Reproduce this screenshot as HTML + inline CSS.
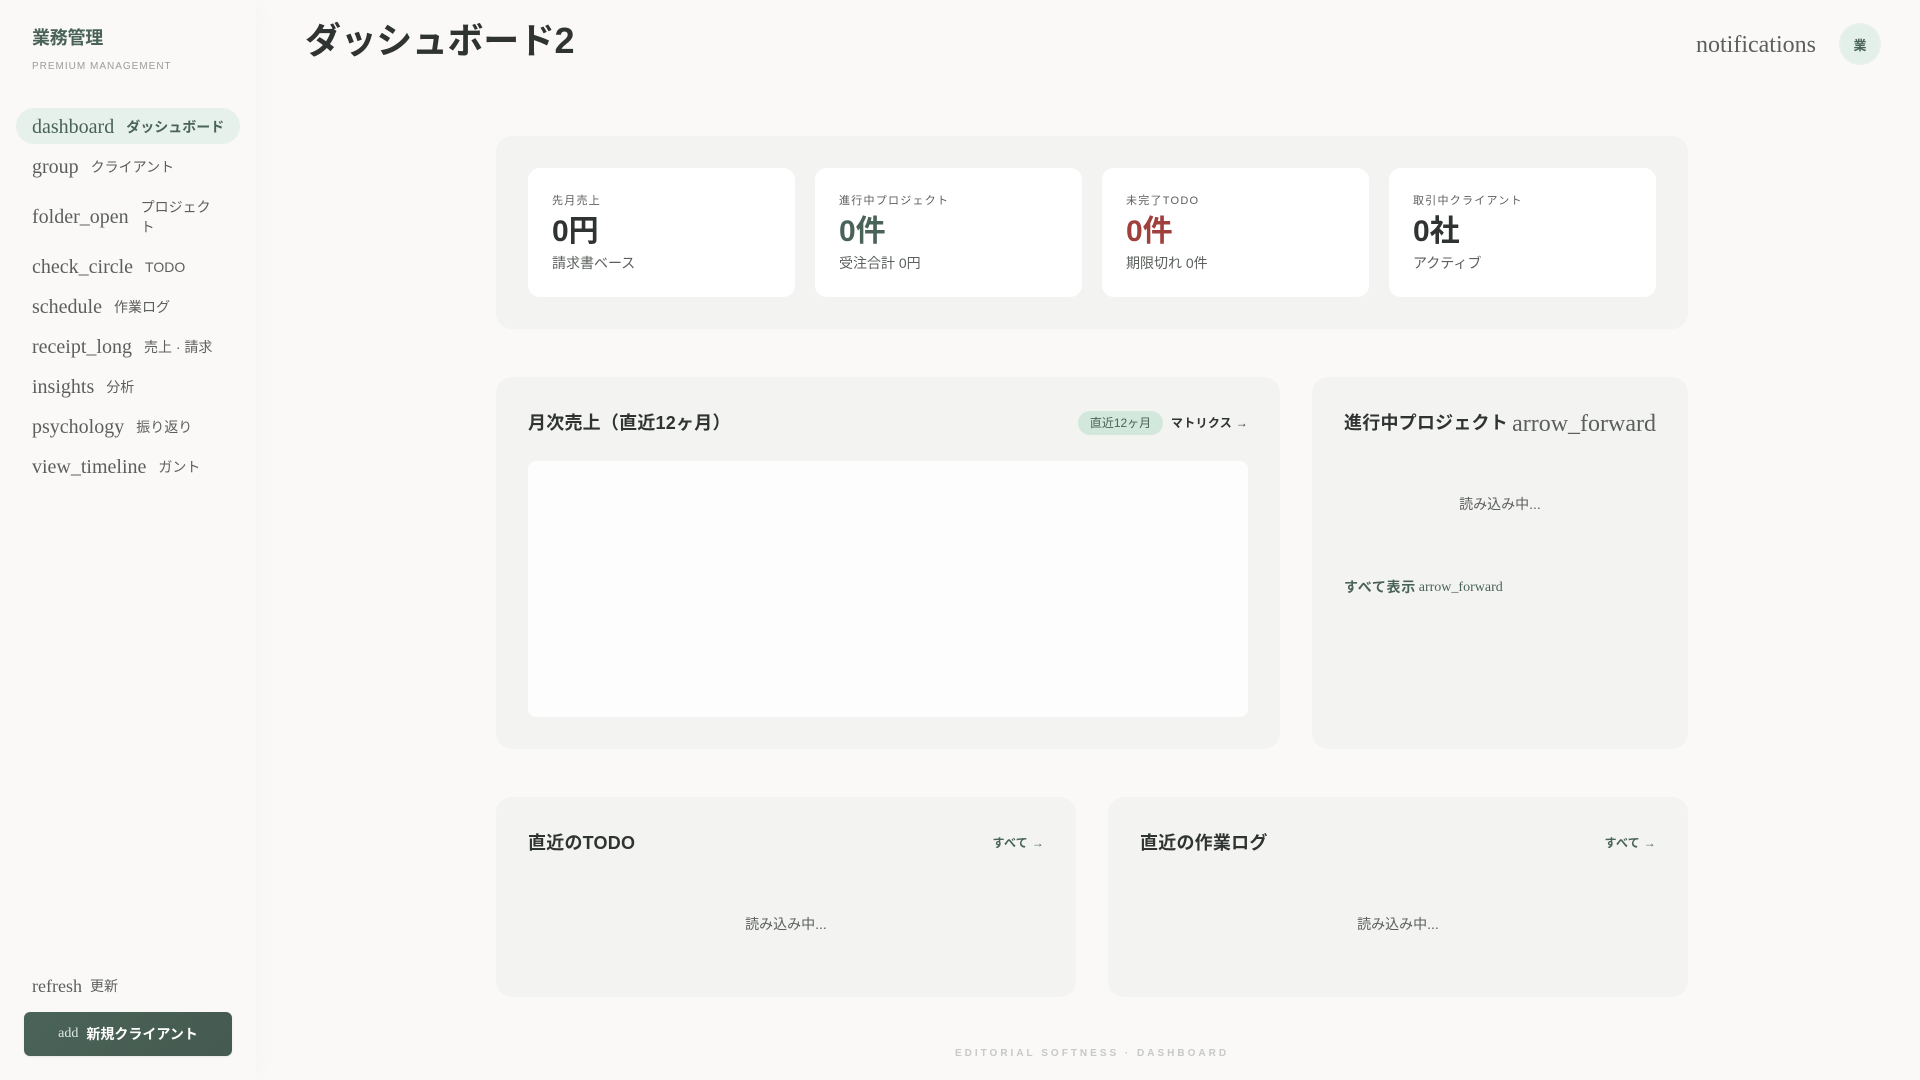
<!DOCTYPE html>
<html lang="ja"><head><meta charset="utf-8"><title>ダッシュボード2</title>
<style>
*{box-sizing:border-box;margin:0;padding:0}
html,body{width:1920px;height:1080px;overflow:hidden;background:#faf9f7;color:#2f3331;font-family:"Liberation Sans","Noto Sans CJK JP",sans-serif}
.ic{font-family:"Liberation Serif",serif;font-weight:400}
.abs{position:absolute}
#side{position:absolute;left:0;top:0;width:256px;height:1080px;background:#fbf9f8;box-shadow:4px 0 24px rgba(47,51,49,.02)}
.logo{position:absolute;left:32px;top:25px;font-size:18px;line-height:26px;font-weight:700;color:#4a6358;letter-spacing:-.25px}
.sub{position:absolute;left:32px;top:60px;font-size:10px;line-height:14px;letter-spacing:1px;color:#9a9d9a}
nav{position:absolute;left:16px;top:108px;width:224px}
nav a{display:flex;align-items:center;gap:12px;padding:9px 16px 7px;margin-bottom:4px;min-height:36px;border-radius:18px;color:#5c605d;font-size:14px;line-height:20px}
nav a .ic{font-size:20px;line-height:20px;flex:none}
nav a.on{background:#e6f1ec;color:#4a6358;font-weight:700;white-space:nowrap}
.refresh{position:absolute;left:32px;top:976px;display:flex;align-items:center;gap:8px;color:#5c605d;font-size:14px;line-height:20px}
.refresh .ic{font-size:18px}
.btn{position:absolute;left:24px;top:1012px;width:208px;height:44px;border-radius:6px;background:linear-gradient(135deg,#4a6358,#455a50);color:#fff;font-size:14px;font-weight:700;display:flex;align-items:center;justify-content:center;gap:8px;box-shadow:0 1px 2px rgba(0,0,0,.08)}
.btn .ic{font-size:14px;color:#dbe9e2}
h1{position:absolute;left:305px;top:16px;font-size:36px;line-height:50px;font-weight:700;white-space:nowrap;color:#2f3331;letter-spacing:-.36px}
.bell{position:absolute;left:1696px;top:31px;font-size:24px;line-height:28px;color:#5c605d}
.av{position:absolute;left:1839px;top:23px;width:42px;height:42px;border-radius:50%;background:#e3efe9;border:2px solid #e8f0ec;color:#4a6358;font-size:13px;font-weight:700;display:flex;align-items:center;justify-content:center}
.panel{position:absolute;background:#f3f4f2;border-radius:16px}
.card{position:absolute;top:168px;width:267px;height:129px;background:#fff;border-radius:12px;padding:25px 24px 0}
.card .l{font-size:11px;line-height:16px;letter-spacing:1.25px;color:#5c605d}
.card .v{font-size:30px;line-height:36px;font-weight:700;margin-top:5px;white-space:nowrap}
.card .s{font-size:14px;line-height:20px;margin-top:3px;color:#5c605d}
.t{position:absolute;font-size:18px;line-height:26px;font-weight:700;white-space:nowrap;color:#2f3331;letter-spacing:.22px}
.load{position:absolute;font-size:14px;line-height:20px;color:#5c605d;text-align:center}
.lnk{position:absolute;font-size:12px;line-height:16px;font-weight:700;color:#4a6358;white-space:nowrap;letter-spacing:.3px}
.foot{position:absolute;left:496px;top:1047px;width:1192px;text-align:center;font-size:10px;line-height:14px;letter-spacing:3px;font-weight:700;color:#c7c9c7}
</style></head><body>
<aside id="side">
<div class="logo">業務管理</div>
<div class="sub">PREMIUM MANAGEMENT</div>
<nav>
<a class="on"><span class="ic">dashboard</span><span>ダッシュボード</span></a>
<a><span class="ic">group</span><span>クライアント</span></a>
<a><span class="ic">folder_open</span><span>プロジェクト</span></a>
<a><span class="ic">check_circle</span><span>TODO</span></a>
<a><span class="ic">schedule</span><span>作業ログ</span></a>
<a><span class="ic">receipt_long</span><span>売上 · 請求</span></a>
<a><span class="ic">insights</span><span>分析</span></a>
<a><span class="ic">psychology</span><span>振り返り</span></a>
<a><span class="ic">view_timeline</span><span>ガント</span></a>
</nav>
<div class="refresh"><span class="ic">refresh</span><span>更新</span></div>
<div class="btn"><span class="ic">add</span><span>新規クライアント</span></div>
</aside>

<h1>ダッシュボード2</h1>
<div class="bell ic">notifications</div>
<div class="av">業</div>

<div class="panel" style="left:496px;top:136px;width:1192px;height:193px"></div>
<div class="card" style="left:528px"><div class="l">先月売上</div><div class="v">0円</div><div class="s">請求書ベース</div></div>
<div class="card" style="left:815px"><div class="l">進行中プロジェクト</div><div class="v" style="color:#4a6358">0件</div><div class="s">受注合計 0円</div></div>
<div class="card" style="left:1102px"><div class="l">未完了TODO</div><div class="v" style="color:#9f403d">0件</div><div class="s">期限切れ 0件</div></div>
<div class="card" style="left:1389px"><div class="l">取引中クライアント</div><div class="v">0社</div><div class="s">アクティブ</div></div>

<div class="panel" style="left:496px;top:377px;width:784px;height:372px"></div>
<div class="t" style="left:528px;top:410px">月次売上（直近12ヶ月）</div>
<div class="abs" style="left:1078px;top:411px;width:85px;height:24px;border-radius:12px;background:#d2e8dd;color:#4a6358;font-size:12px;line-height:24px;text-align:center">直近12ヶ月</div>
<div class="lnk" style="right:672px;top:415px;color:#2f3331">マトリクス →</div>
<div class="abs" style="left:528px;top:461px;width:720px;height:256px;background:#fdfdfd;border-radius:8px"></div>

<div class="panel" style="left:1312px;top:377px;width:376px;height:372px"></div>
<div class="t" style="left:1344px;top:410px">進行中プロジェクト</div>
<div class="abs ic" style="right:264px;top:410px;font-size:24px;line-height:28px;color:#5c605d">arrow_forward</div>
<div class="load" style="left:1344px;top:494px;width:312px">読み込み中...</div>
<div class="abs" style="left:1344px;top:577px;font-size:14px;line-height:20px;font-weight:700;color:#4a6358;white-space:nowrap;letter-spacing:.7px">すべて表示<span class="ic" style="letter-spacing:0;margin-left:2.8px;position:relative;top:-1px">arrow_forward</span></div>

<div class="panel" style="left:496px;top:797px;width:580px;height:200px"></div>
<div class="t" style="left:528px;top:830px">直近のTODO</div>
<div class="lnk" style="right:876px;top:835px">すべて →</div>
<div class="load" style="left:528px;top:914px;width:516px">読み込み中...</div>

<div class="panel" style="left:1108px;top:797px;width:580px;height:200px"></div>
<div class="t" style="left:1140px;top:830px">直近の作業ログ</div>
<div class="lnk" style="right:264px;top:835px">すべて →</div>
<div class="load" style="left:1140px;top:914px;width:516px">読み込み中...</div>

<div class="foot">EDITORIAL SOFTNESS · DASHBOARD</div>
</body></html>
